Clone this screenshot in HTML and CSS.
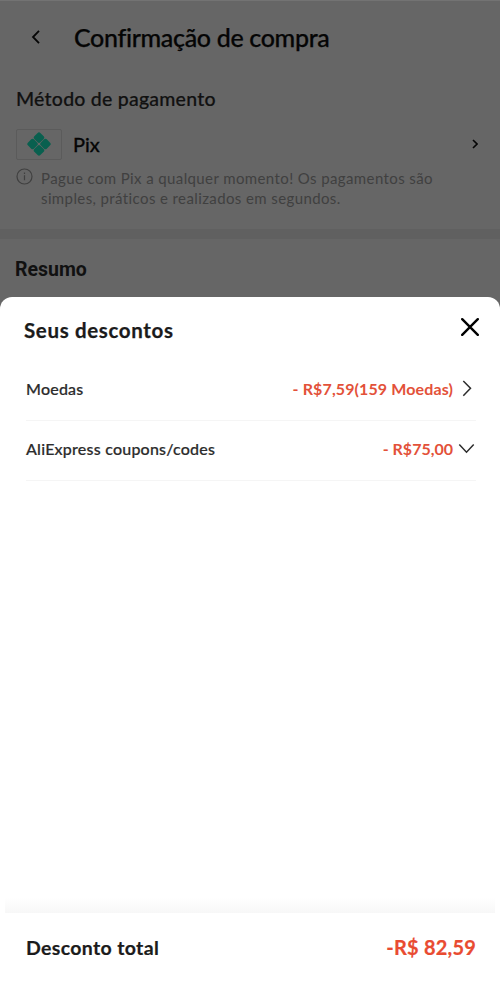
FILE: index.html
```html
<!DOCTYPE html>
<html lang="pt-BR">
<head>
<meta charset="utf-8">
<title>Confirmação de compra</title>
<link rel="stylesheet" href="styles.css">
</head>
<body>
<main class="checkout">
  <header class="topbar">
    <svg class="back" viewBox="0 0 10 14" width="10" height="14"><path d="M8 .8 2 7l6 6.200"/></svg>
    <h1>Confirmação de compra</h1>
  </header>
  <section class="payment">
    <h2>Método de pagamento</h2>
    <div class="method">
      <span class="brand">
        <svg viewBox="0 0 24 24" width="24" height="24"><g transform="rotate(45 12 12)"><rect x="3.200" y="3.200" width="8.500" height="8.500" rx="1.900"/><rect x="12.300" y="3.200" width="8.500" height="8.500" rx="1.900"/><rect x="3.200" y="12.300" width="8.500" height="8.500" rx="1.900"/><rect x="12.300" y="12.300" width="8.500" height="8.500" rx="1.900"/></g></svg>
      </span>
      <span class="method-name">Pix</span>
      <svg class="go" viewBox="0 0 6 10" width="6" height="10"><path d="M1 1l4 4-4 4"/></svg>
    </div>
    <div class="hint">
      <svg viewBox="0 0 17 17" width="17" height="17"><circle cx="8.500" cy="8.500" r="7.500"/><path d="M8.500 7.200v5M8.500 4.500v1.400"/></svg>
      <p>Pague com Pix a qualquer momento! Os pagamentos são<br>simples, práticos e realizados em segundos.</p>
    </div>
  </section>
  <section class="summary"><h2>Resumo</h2></section>
</main>
<div class="sheet">
  <header class="sheet-head">
    <h2>Seus descontos</h2>
    <svg viewBox="0 0 18 18" width="18" height="18"><path d="M1.200 1.200l15.600 15.600M16.800 1.200 1.200 16.800"/></svg>
  </header>
  <div class="rows">
    <div class="row">
      <span class="label">Moedas</span>
      <span class="amount">- R$7,59(159 Moedas)</span>
      <svg viewBox="0 0 16 16" width="16" height="16"><path d="M4.300 0 11.500 7.300l-7.200 7.400"/></svg>
    </div>
    <div class="row">
      <span class="label">AliExpress coupons/codes</span>
      <span class="amount amount-short">- R$75,00</span>
      <svg viewBox="0 0 16 16" width="16" height="16"><path d="M.3 3.600 7.500 11.200l7.200-7.600"/></svg>
    </div>
  </div>
  <div class="fade"></div>
  <footer class="total">
    <span class="total-label">Desconto total</span>
    <span class="total-value">-R$ 82,59</span>
  </footer>
</div>
</body>
</html>
```
FILE: styles.css
```css
* { box-sizing: border-box; }
body {
  margin: 0;
  width: 500px;
  height: 988px;
  position: relative;
  overflow: hidden;
  background: #666;
  color: #050505;
  font-family: Lato, "Liberation Sans", sans-serif;
  font-variant-ligatures: none;
  white-space: nowrap;
}
h1, h2, p { margin: 0; font-weight: 500; }
svg { display: block; flex: none; fill: none; stroke: currentColor; stroke-width: 1.5; }

.topbar { height: 76px; padding: 0 0 4px 31px; display: flex; align-items: center; border-top: 1px solid #737373; }
.back { stroke-width: 1.8; }
h1 { margin-left: 33px; font-size: 25px; line-height: 30px; letter-spacing: -.33px; -webkit-text-stroke: .25px; }

.payment { height: 153px; padding: 10px 22px 0 16px; }
.payment h2 { font-size: 19.500px; line-height: 26px; letter-spacing: .23px; color: #111; -webkit-text-stroke: .2px; }
.method { height: 32px; margin-top: 16px; display: flex; align-items: center; }
.brand { width: 46px; height: 31px; padding-right: 1px; display: grid; place-items: center; border: 1px solid #5b5b5b; border-radius: 2px; }
.brand svg { stroke: none; fill: #09604f; }
.method-name { margin-left: 11px; font-size: 20px; line-height: 28px; -webkit-text-stroke: .35px; }
.go { margin-left: auto; stroke-width: 1.600; }
.hint { display: flex; gap: 8px; margin-top: 8px; color: #404040; }
.hint svg { stroke-width: 1.200; }
.hint p { font-size: 15px; line-height: 20px; letter-spacing: .39px; font-weight: 400; }

.summary { height: 70px; padding: 19px 15px 0; border-top: 10px solid #606060; }
.summary h2 { font: 700 19.500px/24px Roboto, sans-serif; color: #111; }

.sheet {
  position: absolute;
  inset: 297px 0 0;
  display: flex;
  flex-direction: column;
  background: #fff;
  border-radius: 12px 12px 0 0;
}
.sheet-head { height: 62px; padding: 20px 21px 0 24px; display: flex; justify-content: space-between; color: #000; }
.sheet-head h2 { font-size: 20.500px; line-height: 27px; letter-spacing: .65px; font-weight: 700; -webkit-text-stroke: .25px; color: #1b1b1b; }
.sheet-head svg { stroke-width: 2.400; stroke-linecap: round; margin-top: 1px; }
.rows { flex: 1; padding: 2px 24px 0 26px; }
.row { height: 60px; padding-bottom: 4px; display: flex; align-items: center; border-bottom: 1px solid #f5f5f5; color: #2c2c2c; }
.label { font-size: 16px; line-height: 22px; letter-spacing: .22px; font-weight: 500; -webkit-text-stroke: .2px; }
.amount { margin-left: auto; margin-right: 6px; font-size: 16px; line-height: 22px; letter-spacing: .12px; font-weight: 700; color: #e35139; }
.amount-short { letter-spacing: 0; }
.row svg { margin-right: 1px; overflow: visible; stroke-width: 1.500; }
.fade { height: 16px; margin: 0 5px; background: linear-gradient(#fff, #f7f7f7); }
.total { height: 75px; padding: 0 24px 7px 26px; display: flex; justify-content: space-between; align-items: center; font-size: 19px; font-weight: 700; color: #1b1b1b; }
.total-label { font-size: 19.500px; letter-spacing: .35px; -webkit-text-stroke: .2px; }
.total-value { color: #e94b31; font-size: 20px; letter-spacing: .2px; -webkit-text-stroke: .2px; }
```
